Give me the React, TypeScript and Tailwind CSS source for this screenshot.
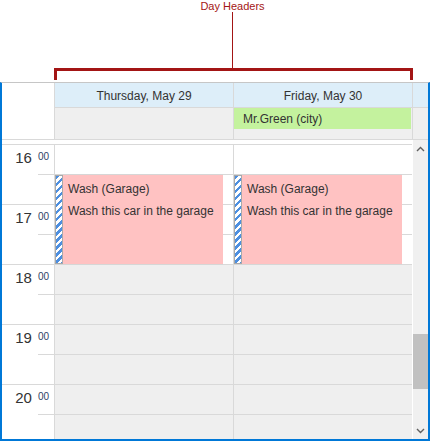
import React from "react";

const hours = [16, 17, 18, 19, 20];
const halfRows = [0, 1, 2, 3, 4, 5, 6, 7, 8, 9];

const Chevron = ({ up }: { up?: boolean }) => (
    <svg width="9" height="6" viewBox="0 0 9 6" className={up ? "" : "rotate-180"}>
        <path d="M1 5 L4.5 1.5 L8 5" fill="none" stroke="#606060" strokeWidth="1.4" />
    </svg>
);

const Appointment = () => (
    <div className="absolute top-[29px] left-0 w-[168px] h-[91px] flex bg-[#ffc2c2] border-y border-[#d6d6d6]">
        <div className="w-[8px] h-full border border-[#a9a9a9] bg-[repeating-linear-gradient(135deg,#4d8fe0_0px,#4d8fe0_2.5px,#ffffff_2.5px,#ffffff_5px)] shrink-0" />
        <div className="pl-[5px] pt-[3px] text-[12px] leading-[22px] text-[#333] whitespace-nowrap">
            <div>Wash (Garage)</div>
            <div>Wash this car in the garage</div>
        </div>
    </div>
);

const DayColumn = ({ last }: { last?: boolean }) => (
    <div className={last ? "relative w-[178px] flex flex-col" : "relative w-[179px] flex flex-col border-r border-[#d9d9d9]"}>
        {halfRows.map((i) => (
            <div key={i} className={i < 4 ? "h-[30px] shrink-0 border-b border-[#d9d9d9] bg-white" : "h-[30px] shrink-0 border-b border-[#d9d9d9] bg-[#efefef]"} />
        ))}
        <Appointment />
    </div>
);

export default function App() {
    return (
        <div className="w-[430px] h-[441px] bg-white font-['Liberation_Sans',Arial,sans-serif] text-[#333] overflow-hidden">
            {/* annotation */}
            <div className="relative h-[82px]">
                <svg className="absolute inset-0" width="430" height="82">
                    <rect x="232" y="12" width="1" height="57" fill="#a31515" />
                    <rect x="54" y="68" width="359" height="3" fill="#a31515" />
                    <rect x="54" y="68" width="3" height="12" fill="#a31515" />
                    <rect x="410" y="68" width="3" height="12" fill="#a31515" />
                </svg>
                <div className="relative ml-[172px] w-[121px] text-center text-[11px] leading-[13px] text-[#a31515]">Day Headers</div>
            </div>

            {/* scheduler */}
            <div className="h-[359px] flex flex-col border-t border-t-[#c6c6c6] border-x-2 border-b-2 border-x-[#0078d7] border-b-[#0078d7]">
                {/* day headers */}
                <div className="flex h-[25px] shrink-0">
                    <div className="w-[53px] border-r border-[#d9d9d9] bg-white" />
                    <div className="w-[179px] border-r border-b border-[#d9d9d9] bg-[#ddeef9] flex items-center justify-center pt-[2px] text-[12px]">Thursday, May 29</div>
                    <div className="w-[179px] border-r border-b border-[#d9d9d9] bg-[#ddeef9] flex items-center justify-center pt-[2px] text-[12px]">Friday, May 30</div>
                    <div className="w-[15px] border-b border-[#d9d9d9] bg-[#ddeef9]" />
                </div>

                {/* all-day row */}
                <div className="flex h-[32px] shrink-0 border-b border-[#d9d9d9]">
                    <div className="w-[53px] border-r border-[#d9d9d9] bg-white" />
                    <div className="w-[179px] border-r border-[#d9d9d9] bg-[#efefef]" />
                    <div className="w-[179px] border-r border-[#d9d9d9] bg-[#efefef]">
                        <div className="h-[21px] w-[177px] bg-[#c4f29e] flex items-center pl-[9px] text-[12px]">Mr.Green (city)</div>
                    </div>
                    <div className="w-[15px] bg-[#efefef]" />
                </div>

                {/* time area */}
                <div className="flex flex-1 min-h-0">
                    <div className="w-[410px] flex flex-col">
                        <div className="h-[4px] shrink-0" />
                        <div className="h-px shrink-0 bg-[#d9d9d9]" />
                        <div className="flex flex-1 min-h-0 overflow-hidden">
                            <div className="w-[53px] border-r border-[#d9d9d9] flex flex-col">
                                {hours.map((h) => (
                                    <div key={h} className="h-[60px] shrink-0 flex flex-col border-b border-[#d9d9d9]">
                                        <div className="h-[29px] flex justify-end items-start pr-[5px] pt-[4px]">
                                            <span className="text-[15px] leading-[18px] text-[#333]">{h}</span>
                                            <span className="ml-[6px] mt-[2px] text-[10px] leading-[12px] text-[#2f4366]">00</span>
                                        </div>
                                        <div className="h-px w-[16px] self-end bg-[#d9d9d9]" />
                                        <div className="h-[29px]" />
                                    </div>
                                ))}
                            </div>
                            <DayColumn />
                            <DayColumn last />
                        </div>
                    </div>

                    {/* scrollbar */}
                    <div className="w-[16px] border-l border-white bg-[#f0f0f0] flex flex-col">
                        <div className="h-[17px] flex items-center justify-center shrink-0"><Chevron up /></div>
                        <div className="mt-[177px] h-[55px] bg-[#c1c1c1] shrink-0" />
                        <div className="flex-1" />
                        <div className="h-[17px] flex items-center justify-center shrink-0"><Chevron /></div>
                    </div>
                </div>
            </div>
        </div>
    );
}
